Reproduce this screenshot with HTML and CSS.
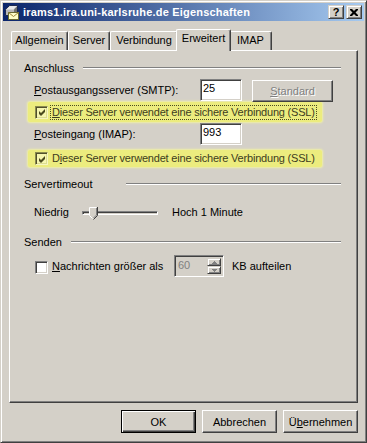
FILE: index.html
```html
<!DOCTYPE html>
<html lang="de">
<head>
  <meta charset="UTF-8">
  <title>irams1.ira.uni-karlsruhe.de Eigenschaften</title>
  <link rel="stylesheet" href="styles.css">
</head>
<body>
  <div class="window">
    <!-- Title bar -->
    <div class="titlebar">
      <svg class="app-icon" width="16" height="16" viewBox="0 0 16 16">
        <path d="M1.5 5.5 L5.5 1.5 H13.5 V8.5 L10.5 11.5 H1.5 Z" fill="#b8b8b8" stroke="#1c2850"/>
        <path d="M2 5.5 L6 2 H13 L9.5 5.5 Z" fill="#e8e8e8"/>
        <path d="M10 5.5 L13 2.5 V8 L10 11 Z" fill="#707070"/>
        <rect x="4.5" y="8.5" width="10" height="7" fill="#ffffc8" stroke="#6a6a30"/>
        <path d="M4.5 8.5 L9.5 12.5 L14.5 8.5" fill="none" stroke="#a08838"/>
      </svg>
      <span class="title">irams1.ira.uni-karlsruhe.de Eigenschaften</span>
      <button class="cap-btn help">?</button>
      <button class="cap-btn close">
        <svg width="8" height="7" viewBox="0 0 8 7">
          <path d="M0 0h2l2 2 2-2h2v1l-2.5 2.5L8 6v1H6L4 5 2 7H0V6l2.5-2.5L0 1z" fill="#000"/>
        </svg>
      </button>
    </div>

    <div class="dialog">
      <!-- Tabs -->
      <div class="tabs">
        <div class="tab tab-allgemein">Allgemein</div>
        <div class="tab tab-server">Server</div>
        <div class="tab tab-verbindung">Verbindung</div>
        <div class="tab tab-erweitert active">Erweitert</div>
        <div class="tab tab-imap">IMAP</div>
      </div>

      <div class="panel">
        <div class="group-head">
          <span>Anschluss</span>
          <div class="etch"></div>
        </div>

        <div class="row row-smtp">
          <span class="label"><u>P</u>ostausgangsserver (SMTP):</span>
          <div class="field">25</div>
          <button class="btn disabled"><u>S</u>tandard</button>
        </div>

        <div class="check-row hl hl-first">
          <span class="check checked">
            <svg width="7" height="7" viewBox="0 0 7 7"><path d="M0 2 L2 4 L6 0 V3 L2 7 L0 5 Z"/></svg>
          </span>
          <span class="check-label focus"><u>D</u>ieser Server verwendet eine sichere Verbindung (SSL)</span>
        </div>

        <div class="row row-imap">
          <span class="label"><u>P</u>osteingang (IMAP):</span>
          <div class="field">993</div>
        </div>

        <div class="check-row hl hl-second">
          <span class="check checked">
            <svg width="7" height="7" viewBox="0 0 7 7"><path d="M0 2 L2 4 L6 0 V3 L2 7 L0 5 Z"/></svg>
          </span>
          <span class="check-label">D<u>i</u>eser Server verwendet eine sichere Verbindung (SSL)</span>
        </div>

        <div class="group-head head-timeout">
          <span>Servertimeout</span>
          <div class="etch etch-wide"></div>
        </div>

        <div class="row row-slider">
          <span class="slider-min">Niedrig</span>
          <div class="slider">
            <div class="groove"></div>
            <svg class="thumb" width="9" height="13" viewBox="0 0 9 13">
              <path d="M0 0 H8 V8 L4 12 L0 8 Z" fill="#d4d0c8"/>
              <path d="M0.5 8.5 V0.5 H7.5" fill="none" stroke="#fff"/>
              <path d="M8.5 0 V8.5 L4.5 12.5" fill="none" stroke="#404040"/>
              <path d="M7.5 1 V8 L4.5 11" fill="none" stroke="#808080"/>
              <path d="M0.5 8.5 L3.5 11.5" fill="none" stroke="#fff"/>
            </svg>
          </div>
          <span class="slider-max">Hoch 1 Minute</span>
        </div>

        <div class="group-head head-senden">
          <span>Senden</span>
          <div class="etch"></div>
        </div>

        <div class="row row-split">
          <span class="check"></span>
          <span class="split-label"><u>N</u>achrichten größer als</span>
          <div class="spinner">
            <span class="spin-value">60</span>
            <div class="spin-buttons">
              <div class="spin-btn">
                <svg width="5" height="3" viewBox="0 0 5 3"><path d="M2 0h1v1h1v1h1v1H0V2h1V1h1z" fill="#808080"/></svg>
              </div>
              <div class="spin-btn">
                <svg width="5" height="3" viewBox="0 0 5 3"><path d="M0 0h5v1H4v1H3v1H2V2H1V1H0z" fill="#808080"/></svg>
              </div>
            </div>
          </div>
          <span class="split-unit">KB aufteilen</span>
        </div>
      </div>

      <!-- Dialog buttons -->
      <div class="actions">
        <button class="btn default">OK</button>
        <button class="btn">Abbrechen</button>
        <button class="btn">Ü<u>b</u>ernehmen</button>
      </div>
    </div>
  </div>
</body>
</html>
```

FILE: styles.css
```css
body {
  margin: 0;
  font-family: "Liberation Sans", Arial, sans-serif;
  font-size: 11px;
  line-height: 13px;
  color: #000;
  background: #d4d0c8;
}

.window {
  width: 367px;
  height: 443px;
  box-sizing: border-box;
  border: 1px solid;
  border-color: #d4d0c8 #404040 #404040 #d4d0c8;
  box-shadow: inset 1px 1px #fff, inset -1px -1px #808080;
  padding: 2px;
  background: #d4d0c8;
}

/* Title bar */
.titlebar {
  height: 18px;
  display: flex;
  align-items: center;
  padding: 0 2px 0 1px;
  background: linear-gradient(to right, #0a246a, #a6caf0);
}

.app-icon {
  flex: none;
}

.title {
  flex: 1;
  margin-left: 3px;
  color: #fff;
  font-weight: bold;
  letter-spacing: 0.2px;
  white-space: nowrap;
}

.cap-btn {
  width: 16px;
  height: 14px;
  box-sizing: border-box;
  padding: 0;
  border: 1px solid;
  border-color: #d4d0c8 #404040 #404040 #d4d0c8;
  box-shadow: inset 1px 1px #fff, inset -1px -1px #808080;
  background: #d4d0c8;
  font-family: inherit;
  font-size: 11px;
  font-weight: bold;
  line-height: 11px;
  display: flex;
  align-items: center;
  justify-content: center;
}

.cap-btn + .cap-btn {
  margin-left: 2px;
}

/* Dialog area */
.dialog {
  padding: 0 6px;
}

.tabs {
  display: flex;
  align-items: flex-end;
  height: 21px;
  margin-top: 8px;
  padding-left: 2px;
}

.tab {
  height: 19px;
  box-sizing: border-box;
  padding-top: 2px;
  text-align: center;
  border-top: 1px solid #fff;
  border-left: 1px solid #fff;
  border-right: 1px solid #404040;
  border-radius: 2px 2px 0 0;
  box-shadow: inset -1px 0 #808080;
  background: #d4d0c8;
}

.tab-allgemein { width: 57px; }
.tab-server { width: 42px; }
.tab-verbindung { width: 68px; }
.tab-erweitert { width: 51px; }
.tab-imap { width: 43px; }

.tab.active {
  position: relative;
  z-index: 1;
  width: 55px;
  height: 22px;
  margin: 0 -2px -1px;
  padding-top: 2px;
}

.panel {
  height: 353px;
  box-sizing: border-box;
  border: 1px solid;
  border-color: #fff #404040 #404040 #fff;
  box-shadow: inset -1px -1px #808080;
  padding: 10px 16px 0 14px;
}

/* Group headings with etched line */
.group-head {
  display: flex;
  align-items: center;
  height: 14px;
}

.etch {
  flex: 1;
  margin-left: 9px;
  border-top: 1px solid #808080;
  border-bottom: 1px solid #fff;
}

.etch-wide {
  margin-left: 34px;
}

.head-timeout { margin-top: 10px; }
.head-senden { margin-top: 12px; }

.row {
  display: flex;
  align-items: center;
  padding-left: 10px;
}

.label {
  width: 166px;
  flex: none;
}

.row-smtp {
  margin-top: 4px;
  height: 23px;
  align-items: flex-start;
}

.row-smtp .label,
.row-imap .label {
  margin-top: 5px;
}

.row-imap {
  margin-top: 1px;
  height: 22px;
  align-items: flex-start;
}

.field {
  width: 42px;
  height: 22px;
  box-sizing: border-box;
  padding: 2px 0 0 2px;
  border: 1px solid;
  border-color: #808080 #fff #fff #808080;
  box-shadow: inset 1px 1px #404040, inset -1px -1px #d4d0c8;
  background: #fff;
}

/* Push buttons */
.btn {
  width: 75px;
  height: 23px;
  box-sizing: border-box;
  padding: 0;
  border: 1px solid;
  border-color: #fff #404040 #404040 #fff;
  box-shadow: inset -1px -1px #808080;
  background: #d4d0c8;
  font-family: inherit;
  font-size: 11px;
  color: #000;
}

.btn.default {
  border-color: #000;
  box-shadow: inset 1px 1px #fff, inset -1px -1px #404040, inset -2px -2px #808080;
}

.btn.disabled {
  width: 81px;
  height: 22px;
  margin: 1px 0 0 10px;
  color: #808080;
  text-shadow: 1px 1px #fff;
}

/* Checkboxes */
.check {
  width: 13px;
  height: 13px;
  flex: none;
  box-sizing: border-box;
  border: 1px solid;
  border-color: #808080 #fff #fff #808080;
  box-shadow: inset 1px 1px #404040, inset -1px -1px #d4d0c8;
  background: #fff;
  display: flex;
  align-items: center;
  justify-content: center;
}

.check svg {
  margin: 1px 0 0 1px;
}

.check-row {
  display: flex;
  align-items: center;
  width: 294px;
  margin-left: 4px;
  padding-left: 7px;
  box-sizing: border-box;
}

.check-row .check {
  margin-right: 2px;
}

.check-label {
  border: 1px dotted transparent;
  padding: 0 1px 0 1px;
  letter-spacing: -0.2px;
  white-space: nowrap;
}

.check-label.focus {
  border-color: #4a4a20;
}

/* Highlighter marks over the SSL options */
.hl {
  background: #ecec7e;
  box-shadow: 0 0 2px 1px #f0f0a4;
  border-radius: 2px;
  color: #3c3c20;
}

.hl .check {
  background: #f6f6b0;
  border-color: #8a8a50 #f6f6c0 #f6f6c0 #8a8a50;
  box-shadow: inset 1px 1px #50502a, inset -1px -1px #dcdc90;
}

.hl .check svg {
  fill: #4a4a1e;
}

.hl-first {
  height: 20px;
  margin-top: 0;
}

.hl-second {
  height: 17px;
  margin-top: 5px;
}

/* Slider */
.row-slider {
  margin-top: 11px;
  height: 21px;
}

.slider-min {
  width: 48px;
}

.slider {
  position: relative;
  width: 76px;
  height: 21px;
  display: flex;
  align-items: center;
}

.groove {
  width: 100%;
  height: 4px;
  box-sizing: border-box;
  border: 1px solid;
  border-color: #808080 #fff #fff #808080;
  box-shadow: inset 1px 1px #404040;
}

.thumb {
  position: absolute;
  left: 7px;
  top: 5px;
}

.slider-max {
  margin-left: 14px;
}

/* Split messages row */
.row-split {
  margin-top: 6px;
  height: 22px;
  padding-left: 11px;
}

.row-split .check {
  align-self: flex-start;
  margin-top: 6px;
}

.split-label {
  width: 122px;
  margin-left: 4px;
}

.spinner {
  width: 50px;
  height: 22px;
  box-sizing: border-box;
  border: 1px solid;
  border-color: #808080 #fff #fff #808080;
  box-shadow: inset 1px 1px #404040, inset -1px -1px #d4d0c8;
  padding: 2px 2px 2px 3px;
  display: flex;
  justify-content: space-between;
}

.spin-value {
  color: #808080;
  padding-top: 1px;
}

.spin-buttons {
  display: flex;
  flex-direction: column;
  width: 14px;
}

.spin-btn {
  height: 9px;
  box-sizing: border-box;
  border: 1px solid;
  border-color: #d4d0c8 #404040 #404040 #d4d0c8;
  box-shadow: inset 1px 1px #fff, inset -1px -1px #808080;
  display: flex;
  align-items: center;
  justify-content: center;
}

.split-unit {
  margin-left: 8px;
}

/* Bottom buttons */
.actions {
  display: flex;
  justify-content: flex-end;
  gap: 6px;
  margin-top: 7px;
}
```
